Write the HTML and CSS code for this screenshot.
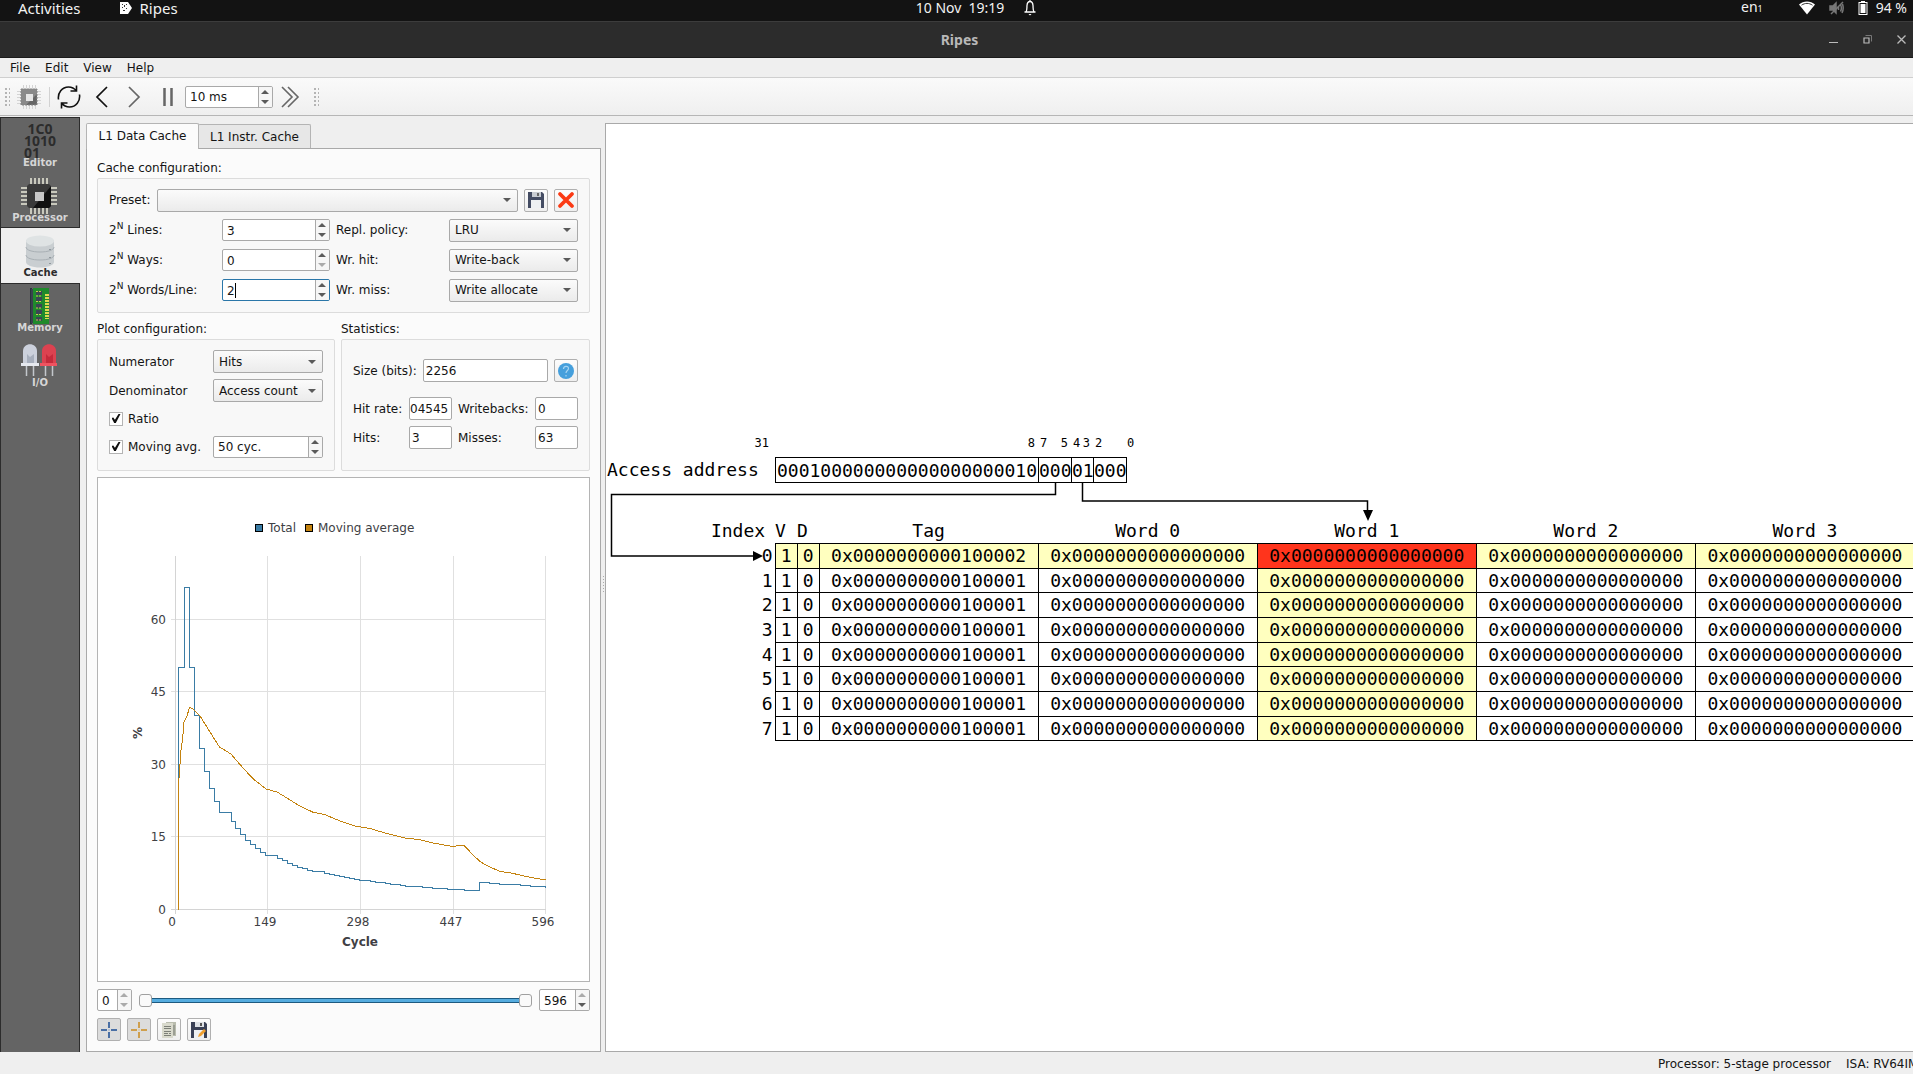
FILE: index.html
```html
<!DOCTYPE html>
<html lang="en">
<head>
<meta charset="utf-8">
<title>Ripes</title>
<link rel="stylesheet" href="styles.css">
</head>
<body>
<div class="app">
  <header class="topbar">
    <div class="topbar-left">
      <button class="plain">Activities</button>
      <button class="plain app-menu">
        <svg width="14" height="14" viewBox="0 0 14 14" aria-hidden="true"><path d="M1 1h8l4 6-4 6H1z" fill="#fff"/><path d="M3 3h1v1H3zM5 4h1v2H5zM3 6h1v1H3zM7 3h1v1H7zM7 7h1v1H7zM4 9h2v1H4z" fill="#333"/></svg>
        <span>Ripes</span>
      </button>
    </div>
    <div class="clock">
      <span>10 Nov&ensp;19:19</span>
      <svg width="14" height="16" viewBox="0 0 14 16" fill="none" stroke="#fff" stroke-width="1.300" aria-hidden="true"><path d="M1.500 12h11M3 12c1.200-2 .8-4 1-6.500C4.200 3 5.300 1.500 7 1.500S9.800 3 10 5.500c.2 2.500-.2 4.500 1 6.500M7 0v2"/><path d="M5.500 14h3L7 15.500z" fill="#fff" stroke="none"/></svg>
    </div>
    <div class="tray">
      <span class="lang">en<small>1</small></span>
      <svg width="16" height="14" viewBox="0 0 16 14" aria-hidden="true"><path d="M0 3.500C4.500-.5 11.500-.5 16 3.500L8 13.500z" fill="#fff"/><path d="M2.500 4.200c3.500-2.400 7.500-2.400 11 0" fill="none" stroke="#333" stroke-width="1"/></svg>
      <svg width="15" height="14" viewBox="0 0 15 14" fill="none" stroke="#777" stroke-width="1.500" aria-hidden="true"><path d="M1 5h3l3-3v10L4 9H1z" fill="#777"/><path d="M14 1 2 13M9.500 5v4M11.500 3.500c1 2 1 5 0 7M13.500 3c1 3 1 6-.5 9"/></svg>
      <svg width="10" height="14" viewBox="0 0 10 14" aria-hidden="true"><path d="M3 0h4v1h2.500v13H.5V1H3z" fill="#fff"/><path d="M1.500 2h7v11h-7z" fill="#131313"/><path d="M2.500 3h5v9h-5z" fill="#fff"/></svg>
      <span class="percent">94 %</span>
    </div>
  </header>

  <div class="titlebar">
    <h1>Ripes</h1>
    <div class="window-buttons">
      <button class="plain" aria-label="Minimize"><svg width="9" height="9" viewBox="0 0 9 9"><path d="M0 7.500h9" stroke="#bbb"/></svg></button>
      <button class="plain" aria-label="Restore"><svg width="9" height="9" viewBox="0 0 9 9" fill="none"><path d="M2.500.5h6v6" stroke="#777"/><path d="M1 3h5v5H1z" stroke="#bbb" stroke-width="1.200"/></svg></button>
      <button class="plain" aria-label="Close"><svg width="9" height="9" viewBox="0 0 9 9"><path d="m.5.5 8 8m0-8-8 8" stroke="#bbb" stroke-width="1.300"/></svg></button>
    </div>
  </div>

  <nav class="menubar">
    <button class="plain">File</button>
    <button class="plain">Edit</button>
    <button class="plain">View</button>
    <button class="plain">Help</button>
  </nav>

  <div class="toolbar">
    <span class="grip"></span>
    <button class="plain tool chip" aria-label="Select processor">
      <svg width="24" height="24" viewBox="0 0 24 24"><path d="M6.500 0v24M9.500 0v24M12.500 0v24M15.500 0v24M18.500 0v24M0 6.500h24M0 9.500h24M0 12.500h24M0 15.500h24M0 18.500h24" stroke="#d4d4d4"/><path d="M4 4h16v16H4z" fill="#8a8a8a"/><path d="M20 9v11H9z" fill="#666"/><path d="M4 4h16v16H4z" fill="none" stroke="#858585" stroke-dasharray="2 1"/><path d="M9 9h7v7H9z" fill="#e6e6e6"/></svg>
    </button>
    <span class="rule"></span>
    <button class="plain tool reset" aria-label="Reset">
      <svg width="24" height="24" viewBox="0 0 24 24" fill="none" stroke="#111" stroke-width="1.600"><path d="M1.500 14.500C.5 8 5 2 11.500 2c3.500 0 6 1.500 8 4M22.500 9.500C23.500 16 19 22 12.500 22c-3.500 0-6-1.500-8-4M19.500 .5V6h-6M4.500 23.500V18h6"/></svg>
    </button>
    <button class="plain tool back" aria-label="Step back">
      <svg width="14" height="22" viewBox="0 0 14 22"><path d="M12 1 2 11l10 10" fill="none" stroke="#111" stroke-width="1.700"/></svg>
    </button>
    <button class="plain tool step" aria-label="Step">
      <svg width="14" height="22" viewBox="0 0 14 22"><path d="m2 1 10 10L2 21" fill="none" stroke="#666" stroke-width="1.700"/></svg>
    </button>
    <button class="plain tool pause" aria-label="Pause">
      <svg width="10" height="18" viewBox="0 0 10 18"><path d="M1.500 0v18M8.500 0v18" stroke="#666" stroke-width="2.500"/></svg>
    </button>
    <span class="spin interval"><input type="text" value="10 ms" aria-label="Step interval"><button class="up" aria-label="Increase interval"></button><button class="down" aria-label="Decrease interval"></button></span>
    <button class="plain tool run" aria-label="Run">
      <svg width="19" height="22" viewBox="0 0 19 22"><path d="m1 1 10 10L1 21M7 1l10 10L7 21" fill="none" stroke="#666" stroke-width="1.600"/></svg>
    </button>
    <span class="grip"></span>
  </div>

  <div class="workspace">
    <nav class="sidebar">
      <button class="plain page">
        <span class="binary" aria-hidden="true"><span>&nbsp;1C0</span><span>1010</span><span>01</span></span>
        <span class="page-name">Editor</span>
      </button>
      <button class="plain page">
        <svg width="36" height="36" viewBox="0 0 36 36"><path d="M10 0v36M14 0v36M18 0v36M22 0v36M26 0v36M0 10h36M0 14h36M0 18h36M0 22h36M0 26h36" stroke="#c9c9bd" stroke-width="2"/><path d="M6 8l2-2h20l2 2v20l-2 2H8l-2-2z" fill="#3a3a3a"/><path d="M30 8v20l-2 2H12z" fill="#111"/><path d="M14 14h9v9h-9z" fill="#c8c8c8"/></svg>
        <span class="page-name">Processor</span>
      </button>
      <button class="plain page current">
        <svg width="30" height="36" viewBox="0 0 30 36"><path d="M1 7v22c0 3 6 5.500 14 5.500S29 32 29 29V7z" fill="#c9ced1"/><path d="M1 14c0 3 6 5 14 5s14-2 14-5M1 22c0 3 6 5 14 5s14-2 14-5" fill="none" stroke="#a9b0b5"/><ellipse cx="15" cy="8" rx="14" ry="5.500" fill="#dfe3e4"/><path d="M24 16h2v1h-2zM24 24h2v1h-2zM24 30h2v1h-2z" fill="#8f979c"/></svg>
        <span class="page-name">Cache</span>
      </button>
      <button class="plain page">
        <svg width="36" height="36" viewBox="0 0 36 36"><path d="M9 0h2v36H9z" fill="#2a323c"/><path d="M10 1h4v34h-4z" fill="#39424e"/><path d="M12 0h16v36H12z" fill="#1f8a2c"/><path d="M15 3h6v4h-6zM15 9h6v4h-6zM15 16h6v4h-6zM15 22h6v4h-6zM15 29h6v4h-6z" fill="#3b4654"/><path d="M15 3.500h6M15 8h6M15 13.500h6M15 20h6M15 26.500h6M15 32h6" stroke="#c8c850" stroke-dasharray="2 1"/><path d="M26 6v25" stroke="#e0d850" stroke-width="4" stroke-dasharray="2 1"/></svg>
        <span class="page-name">Memory</span>
      </button>
      <button class="plain page">
        <svg width="36" height="36" viewBox="0 0 36 36"><path d="M5.500 22v11M12.500 22v11M24.500 22v11M31.500 22v11" stroke="#c3c7cc" stroke-width="1.500"/><path d="M2 21V8c0-9 14-9 14 0v13z" fill="#ccd1dc"/><path d="M21 21V8c0-9 14-9 14 0v13z" fill="#dc4250"/><path d="M6 20v-9l3 3 4-3v9z" fill="#a7afbd"/><path d="M25 20v-9l3 3 4-3v9z" fill="#c52a3b"/><path d="M0 20h18v3H0z" fill="#e6e9ef"/><path d="M19 20h17v3H19z" fill="#ef5360"/></svg>
        <span class="page-name">I/O</span>
      </button>
    </nav>

    <section class="cache-panel">
      <div class="tabs" role="tablist">
        <button class="tab selected" role="tab" aria-selected="true">L1 Data Cache</button>
        <button class="tab" role="tab" aria-selected="false">L1 Instr. Cache</button>
      </div>
      <div class="pane">
        <h2>Cache configuration:</h2>
        <div class="box cache-config">
          <div class="preset">
            <label for="preset">Preset:</label>
            <span class="combo"><select id="preset"><option></option></select></span>
            <button class="icon-button" aria-label="Save preset"><svg width="16" height="16" viewBox="0 0 16 16"><path d="M0 0h14l2 2v14H0z" fill="#444c63"/><path d="M4 0h9v5H4z" fill="#c9cdd3"/><path d="M9 1h2v3H9z" fill="#666"/><path d="M3 8h10v8H3z" fill="#eef0f2"/></svg></button>
            <button class="icon-button" aria-label="Delete preset"><svg width="18" height="18" viewBox="0 0 18 18"><path d="m3 3 12 12m0-12L3 15" stroke="#fb3a14" stroke-width="3.800" stroke-linecap="round"/></svg></button>
          </div>
          <label for="lines">2<sup>N</sup> Lines:</label>
          <span class="spin"><input id="lines" type="text" value="3"><button class="up" aria-label="More lines"></button><button class="down" aria-label="Fewer lines"></button></span>
          <label for="repl">Repl. policy:</label>
          <span class="combo"><select id="repl"><option>LRU</option></select></span>
          <label for="ways">2<sup>N</sup> Ways:</label>
          <span class="spin"><input id="ways" type="text" value="0"><button class="up" aria-label="More ways"></button><button class="down" disabled aria-label="Fewer ways"></button></span>
          <label for="hit">Wr. hit:</label>
          <span class="combo"><select id="hit"><option>Write-back</option></select></span>
          <label for="words">2<sup>N</sup> Words/Line:</label>
          <span class="spin focused"><input id="words" type="text" value="2"><i class="caret"></i><button class="up" aria-label="More words"></button><button class="down" aria-label="Fewer words"></button></span>
          <label for="miss">Wr. miss:</label>
          <span class="combo"><select id="miss"><option>Write allocate</option></select></span>
        </div>

        <div class="pair">
          <div class="plot-group">
            <h2>Plot configuration:</h2>
            <div class="box plot-config">
              <label for="num">Numerator</label>
              <span class="combo"><select id="num"><option>Hits</option></select></span>
              <label for="den">Denominator</label>
              <span class="combo"><select id="den"><option>Access count</option></select></span>
              <label class="check wide"><input type="checkbox" checked>Ratio</label>
              <label class="check"><input type="checkbox" checked>Moving avg.</label>
              <span class="spin"><input type="text" value="50 cyc." aria-label="Moving average cycles"><button class="up" aria-label="More cycles"></button><button class="down" aria-label="Fewer cycles"></button></span>
            </div>
          </div>
          <div class="stats-group">
            <h2>Statistics:</h2>
            <div class="box stats">
              <div class="size-row">
                <label for="size">Size (bits):</label>
                <input class="line" id="size" type="text" value="2256" readonly>
                <button class="icon-button" aria-label="Size breakdown"><svg width="16" height="16" viewBox="0 0 16 16"><circle cx="8" cy="8" r="8" fill="#459fdc"/><path d="M5.500 6c0-3.500 5-3.500 5-.5C10.500 7.500 8 7.500 8 10M8 12v1.500" fill="none" stroke="#a5d4f2" stroke-width="1.200"/></svg></button>
              </div>
              <div class="stat-grid">
                <label for="rate">Hit rate:</label><input class="line scrolled" id="rate" type="text" value="04545" readonly>
                <label for="wb">Writebacks:</label><input class="line" id="wb" type="text" value="0" readonly>
                <label for="hits">Hits:</label><input class="line" id="hits" type="text" value="3" readonly>
                <label for="misses">Misses:</label><input class="line" id="misses" type="text" value="63" readonly>
              </div>
            </div>
          </div>
        </div>

        <div class="chart">
          <svg viewBox="0 0 491 503" preserveAspectRatio="xMidYMid meet" role="img" aria-label="Hit rate over cycles">
            <g transform="translate(-98 -478)">
              <g shape-rendering="crispEdges">
                <path class="grid-line" d="M267.500 556v358M360.500 556v358M453.500 556v358M545.500 556v358M171 619.500h375M171 691.500h375M171 764.500h375M171 836.500h375"/>
                <path class="axis-line" d="M175.500 556v358M171 909.500h375"/>
                <path class="swatch total" d="M255.500 524.500h7v7h-7z"/>
                <path class="swatch moving" d="M305.500 524.500h7v7h-7z"/>
                <path class="series total-line" d="M178.500 909.500V667.500H184.500V640.500V587.500H189.500V667.500H194.500V715.500H199.500V748.500H204.500V771.500H209.500V788.500H214.500V801.500H219.500V812.500H231.500V821.500H235.500V828.500H240.500V834.500H245.500V840.500H250.500V844.500H255.500V848.500H260.500V852.500H265.500V855.500H277.500V858.500H282.500V860.500H287.500V863.500H292.500V865.500H297.500V867.500H302.500V868.500H307.500V870.500H312.500V871.500H324.500V873.500H329.500V874.500H334.500V875.500H339.500V876.500H344.500V877.500H349.500V878.500H354.500V879.500H359.500V880.500H370.500V881.500H375.500V882.500H385.500V883.500H390.500V884.500H400.500V885.500H405.500V886.500H422.500V887.500H432.500V888.500H447.500V889.500H464.500V890.500H479.500V882.500H489.500V883.500H499.500V884.500H520.500V885.500H530.500V886.500H545.500V887.500"/>
                <path class="series moving-line" d="M178.500 909.500V785L181 750L182.500 740L184 722L187 716L189.500 707.500L193 708.700L200 716L215 740L219.500 747L231 754L243 768L253 778.700L266 789L277 792L287 798L298 805L312.500 812L324.500 814.500L340 821L355 826L370 828.500L385 833L405 838L420 839.700L433 843L453 846.500L460 845.500H464L468 849.500L473 855L479.500 861L485 864.700L500 871.500L510 872.700L527 876.700L540 879L546 879.700"/>
              </g>
              <g class="labels">
                <text x="268" y="532">Total</text>
                <text x="318" y="532">Moving average</text>
                <g text-anchor="end">
                  <text x="166" y="624">60</text>
                  <text x="166" y="696">45</text>
                  <text x="166" y="769">30</text>
                  <text x="166" y="841">15</text>
                  <text x="166" y="914">0</text>
                </g>
                <g text-anchor="middle">
                  <text x="172" y="926">0</text>
                  <text x="265" y="926">149</text>
                  <text x="358" y="926">298</text>
                  <text x="451" y="926">447</text>
                  <text x="543" y="926">596</text>
                  <text class="axis-title" x="360" y="946">Cycle</text>
                  <text class="axis-title" transform="translate(142 733) rotate(-90)">%</text>
                </g>
              </g>
            </g>
          </svg>
        </div>

        <div class="range-row">
          <span class="spin from"><input type="text" value="0" aria-label="Range start"><button class="up" disabled aria-label="Increase start"></button><button class="down" disabled aria-label="Decrease start"></button></span>
          <div class="dual-range">
            <input type="range" min="0" max="596" value="0" aria-label="First cycle">
            <input type="range" min="0" max="596" value="596" aria-label="Last cycle">
          </div>
          <span class="spin to"><input type="text" value="596" aria-label="Range end"><button class="up" disabled aria-label="Increase end"></button><button class="down" aria-label="Decrease end"></button></span>
        </div>

        <div class="plot-buttons">
          <button class="icon-button pressed" aria-label="Total crosshair"><svg width="16" height="16" viewBox="0 0 16 16"><path d="M8 0v6M8 10v6M0 8h6M10 8h6" stroke="#4a6fa5" stroke-width="2"/><path d="M7 7h2v2H7z" fill="#b9c4d4"/></svg></button>
          <button class="icon-button pressed" aria-label="Moving average crosshair"><svg width="16" height="16" viewBox="0 0 16 16"><path d="M8 0v6M8 10v6M0 8h6M10 8h6" stroke="#cf9f4d" stroke-width="2"/><path d="M7 7h2v2H7z" fill="#dccfb4"/></svg></button>
          <button class="icon-button" aria-label="Copy data"><svg width="16" height="16" viewBox="0 0 16 16"><path d="M5 0h10v14H5z" fill="#b9bcae"/><path d="M1 1h11v15H1z" fill="#d9dacd"/><path d="M3 4.500h7M3 6.500h7M3 9.500h7M3 11.500h4M8 11.500h2M3 13.500h7M13 3v10" stroke="#7d8078"/></svg></button>
          <button class="icon-button" aria-label="Save plot"><svg width="16" height="16" viewBox="0 0 16 16"><path d="M0 0h14l2 2v14H0z" fill="#3a4156"/><path d="M4 0h9v5H4z" fill="#dfe2e6"/><path d="M9 1h2v3H9z" fill="#555"/><path d="M3 8h10v8H3z" fill="#eef0f2"/><path d="m7 15 1-3 5-5 2 2-5 5z" fill="#f0a030"/></svg></button>
        </div>
      </div>
    </section>

    <div class="splitter"><span></span></div>

    <main class="view">
      <div class="scene">
        <div class="bit-row">
          <span class="bit-top">31</span>
          <span class="bits tag-bits end"><b>8</b></span>
          <span class="bits index-bits"><b>7</b><b>5</b></span>
          <span class="bits word-bits"><b>4</b><b>3</b></span>
          <span class="bits byte-bits"><b>2</b></span>
          <b>0</b>
        </div>
        <div class="address-row">
          <span class="address-label">Access address</span>
          <span class="address">
            <span class="tag-bits">000100000000000000000010</span>
            <span class="index-bits">000</span>
            <span class="word-bits">01</span>
            <span class="byte-bits">000</span>
          </span>
        </div>
        <table>
          <colgroup><col class="c-index"><col class="c-bit"><col class="c-bit"><col class="c-word"><col class="c-word"><col class="c-word"><col class="c-word"><col class="c-word"></colgroup>
          <thead><tr><th class="index-head">Index</th><th class="bit-head">V</th><th class="bit-head">D</th><th>Tag</th><th>Word 0</th><th>Word 1</th><th>Word 2</th><th>Word 3</th></tr></thead>
          <tbody>
            <tr class="hit"><th>0</th><td>1</td><td>0</td><td>0x0000000000100002</td><td>0x0000000000000000</td><td>0x0000000000000000</td><td>0x0000000000000000</td><td>0x0000000000000000</td></tr>
            <tr><th>1</th><td>1</td><td>0</td><td>0x0000000000100001</td><td>0x0000000000000000</td><td>0x0000000000000000</td><td>0x0000000000000000</td><td>0x0000000000000000</td></tr>
            <tr><th>2</th><td>1</td><td>0</td><td>0x0000000000100001</td><td>0x0000000000000000</td><td>0x0000000000000000</td><td>0x0000000000000000</td><td>0x0000000000000000</td></tr>
            <tr><th>3</th><td>1</td><td>0</td><td>0x0000000000100001</td><td>0x0000000000000000</td><td>0x0000000000000000</td><td>0x0000000000000000</td><td>0x0000000000000000</td></tr>
            <tr><th>4</th><td>1</td><td>0</td><td>0x0000000000100001</td><td>0x0000000000000000</td><td>0x0000000000000000</td><td>0x0000000000000000</td><td>0x0000000000000000</td></tr>
            <tr><th>5</th><td>1</td><td>0</td><td>0x0000000000100001</td><td>0x0000000000000000</td><td>0x0000000000000000</td><td>0x0000000000000000</td><td>0x0000000000000000</td></tr>
            <tr><th>6</th><td>1</td><td>0</td><td>0x0000000000100001</td><td>0x0000000000000000</td><td>0x0000000000000000</td><td>0x0000000000000000</td><td>0x0000000000000000</td></tr>
            <tr><th>7</th><td>1</td><td>0</td><td>0x0000000000100001</td><td>0x0000000000000000</td><td>0x0000000000000000</td><td>0x0000000000000000</td><td>0x0000000000000000</td></tr>
          </tbody>
        </table>
        <svg class="wires" width="800" height="308" viewBox="0 0 800 308" aria-hidden="true">
          <path d="M449.500 49v11.500H5.500v61.500H150M476.500 49v18h285v12" fill="none" stroke="#000" stroke-width="1.500"/>
          <path d="M147 117v10l10-5zM757 76h10l-5 11z"/>
        </svg>
      </div>
    </main>
  </div>

  <footer class="statusbar">
    <span>Processor: 5-stage processor</span>
    <span class="isa">ISA: RV64IM</span>
  </footer>
</div>
</body>
</html>
```
FILE: styles.css
```css
* { box-sizing: border-box; }

body {
  margin: 0;
  font: 12px/20px "DejaVu Sans", sans-serif;
  color: #141414;
  background: #efefef;
  overflow: hidden;
}

button, input, select { font: inherit; color: inherit; margin: 0; }
svg { display: block; }
h1, h2 { margin: 0; font-size: inherit; font-weight: normal; }

.plain { border: 0; padding: 0; background: none; }

.app { display: flex; flex-direction: column; height: 100vh; }

/* desktop bar */
.topbar {
  display: grid;
  grid-template-columns: 1fr auto 1fr;
  height: 21px;
  padding: 0 6px 0 18px;
  background: #131313;
  color: #f2f2f2;
  font: 14px/16px "Noto Sans", sans-serif;
  align-items: start;
}
.topbar-left, .clock, .tray, .app-menu { display: flex; align-items: center; height: 16px; }
.topbar-left { gap: 38px; font-size: 15px; }
.app-menu { gap: 7px; }
.clock { gap: 19px; padding-left: 28px; }
.tray { justify-content: flex-end; }
.tray small { font-size: 9px; }
.lang { margin-right: 36px; }
.tray svg { margin-right: 14px; }
.tray svg:last-of-type { margin-right: 8px; }

.titlebar {
  display: grid;
  grid-template-columns: 1fr auto 1fr;
  align-items: center;
  height: 37px;
  padding: 0 7px 0 13px;
  background: #2c2c2c;
  border-top: 1px solid #3c3c3c;
  border-bottom: 1px solid #1b1b1b;
  color: #b8b8b8;
}
.titlebar h1 { grid-column: 2; font: bold 14px/20px "Noto Sans", sans-serif; }
.window-buttons { display: flex; justify-content: flex-end; gap: 25px; }

.menubar {
  display: flex;
  gap: 15px;
  height: 20px;
  padding-left: 10px;
  border-bottom: 1px solid #cfcfcf;
}

.toolbar {
  display: flex;
  align-items: center;
  height: 38px;
  padding-left: 5px;
  background: linear-gradient(#fafafa, #efefef);
  border-bottom: 1px solid #b6b6b6;
}
.grip {
  width: 5px;
  height: 18px;
  background: radial-gradient(circle at 1px 1px, #b4b4b4 1px, transparent 1px) 0 0 / 4px 4px;
}
.rule { width: 1px; height: 20px; background: #d2d2d2; }
.chip { margin: 0 8px 0 7px; }
.reset { margin: 0 14px 0 7px; }
.back { margin-right: 18px; }
.step { margin-right: 22px; }
.interval { width: 88px; margin: 0 8px 0 12px; }
.run { margin-right: 14px; }

/* workspace */
.workspace { display: flex; flex: 1; min-height: 0; }

.sidebar {
  width: 80px;
  margin-top: 1px;
  background: #646464;
  border: 1px solid #2c2c2c;
  border-width: 1px 1px 0;
}
.page {
  display: flex;
  flex-direction: column;
  align-items: center;
  width: 78px;
  height: 55px;
  padding-top: 5px;
  color: #d6d6d6;
  font-weight: bold;
}
.page svg { height: 36px; flex: none; margin-right: 2px; }
.page-name { font-size: 10px; line-height: 10px; margin-top: -1px; }
.page.current {
  width: 79px;
  background: #efefef;
  color: #2c2c2c;
  box-shadow: 0 -1px #2c2c2c, 0 1px #2c2c2c;
}
.binary {
  display: grid;
  height: 36px;
  font: bold 14px/12px "Noto Sans", sans-serif;
  color: #2c2c2c;
  text-align: left;
}

.cache-panel {
  display: flex;
  flex-direction: column;
  width: 515px;
  margin: 7px 0 0 6px;
}
.tabs { display: flex; align-items: flex-end; height: 25px; }
.tab {
  height: 24px;
  width: 113px;
  margin-left: -1px;
  padding: 1px 0 0;
  border: 1px solid #b4b4b4;
  border-bottom: 0;
  border-radius: 2px 2px 0 0;
  background: #e7e7e7;
}
.tab.selected {
  height: 26px;
  width: 113px;
  margin: 0 0 -1px;
  padding: 0 0 1px;
  background: #fbfbfb;
  position: relative;
}
.pane {
  display: flex;
  flex-direction: column;
  flex: 1;
  min-height: 0;
  padding: 9px 10px 10px;
  background: #fbfbfb;
  border: 1px solid #a9a9a9;
}
.box {
  padding: 10px 11px;
  background: #f8f8f8;
  border: 1px solid #dcdcdc;
  border-radius: 2px;
}

.cache-config {
  display: grid;
  grid-template-columns: 107px 108px 107px 1fr;
  grid-auto-rows: 24px;
  gap: 6px;
  align-items: center;
  padding: 9px 11px 10px;
}
.preset { grid-column: 1 / -1; display: flex; align-items: center; gap: 6px; }
.preset label { width: 42px; }
.preset .combo { flex: 1; }
sup { font-size: 9px; line-height: 0; vertical-align: 5px; }

.pair { display: flex; gap: 6px; margin: 6px 0; }
.plot-group { width: 238px; }
.stats-group { flex: 1; }
.plot-config {
  display: grid;
  grid-template: 23px 23px 21px 23px / 98px 1fr;
  gap: 6px;
  align-items: center;
  align-content: start;
  height: 132px;
}
.stats { height: 132px; padding-top: 19px; }
.size-row { display: flex; gap: 6px; align-items: center; margin-bottom: 15px; }
.size-row .line { flex: 1; }
.stat-grid {
  display: grid;
  grid-template-columns: 50px 1fr 71px 1fr;
  gap: 6px;
  align-items: center;
}
label { white-space: nowrap; }

/* controls */
.combo { display: grid; align-items: center; height: 23px; }
.combo select {
  grid-area: 1 / 1;
  appearance: none;
  width: 100%;
  height: 23px;
  padding: 0 0 0 5px;
  border: 1px solid #a9a9a9;
  border-radius: 2px;
  background: linear-gradient(#fbfbfb, #ebebeb);
}
.combo::after {
  content: "";
  grid-area: 1 / 1;
  justify-self: end;
  margin-right: 7px;
  border: 4px solid transparent;
  border-top-color: #5a5a5a;
  border-bottom: 0;
  pointer-events: none;
}

.spin {
  display: grid;
  grid-template: 1fr 1fr / 1fr 14px;
  height: 22px;
  border: 1px solid #a9a9a9;
  border-radius: 2px;
  background: #fff;
  overflow: hidden;
}
.spin input {
  grid-area: 1 / 1 / 3 / 2;
  min-width: 0;
  width: 100%;
  padding: 1px 0 0 4px;
  border: 0;
  background: none;
  outline: 0;
}
.spin button {
  display: grid;
  place-content: center;
  grid-column: 2;
  min-height: 0;
  padding: 0 1px 0 0;
  border: 0;
  border-left: 1px solid #a9a9a9;
  background: #f6f6f6;
}
.spin .up { grid-row: 1; }
.spin .down { grid-row: 2; }
.spin button::before { content: ""; border: 4px solid transparent; }
.spin .up::before { border-bottom-color: #5a5a5a; border-top: 0; }
.spin .down::before { border-top-color: #5a5a5a; border-bottom: 0; }
.spin .up:disabled::before { border-bottom-color: #aaa; }
.spin .down:disabled::before { border-top-color: #aaa; }
.spin.focused { border-color: #2a76a8; }
.caret { grid-area: 1 / 1 / 3 / 2; align-self: center; width: 1px; height: 15px; margin-left: 12px; background: #000; }

.line {
  width: 100%;
  min-width: 0;
  height: 23px;
  padding: 0 2px;
  border: 1px solid #a9a9a9;
  border-radius: 2px;
  background: #fff;
}
.line.scrolled { padding: 0; }

.icon-button {
  display: grid;
  place-items: center;
  flex: none;
  width: 24px;
  height: 23px;
  padding: 0;
  border: 1px solid #b0b0b0;
  border-radius: 2px;
  background: linear-gradient(#fcfcfc, #efefef);
}
.icon-button.pressed { background: #dcdcdc; }

.check { display: flex; align-items: center; gap: 5px; }
.check.wide { grid-column: 1 / -1; }
.check input {
  display: grid;
  place-items: center;
  appearance: none;
  width: 14px;
  height: 14px;
  border: 1px solid #b4b4b4;
  background: #fff;
}
.check input:checked::before {
  content: "";
  width: 9px;
  height: 9px;
  background: #111;
  clip-path: polygon(0 45%, 20% 38%, 38% 65%, 78% 0, 100% 0, 48% 100%, 30% 100%);
}

/* plot */
.chart { flex: 1; min-height: 0; background: #fff; border: 1px solid #b4b4b4; }
.chart svg { width: 100%; height: 100%; }
.grid-line, .axis-line, .series { fill: none; stroke-width: 1; }
.grid-line { stroke: #e0e0e0; }
.axis-line { stroke: #d4d4d4; }
.swatch { stroke: #000; }
.swatch.total { fill: #3a7ca5; }
.swatch.moving { fill: #c4830f; }
.total-line { stroke: #3a7ca5; }
.moving-line { stroke: #c4830f; }
.labels { font-size: 12px; fill: #404044; }
.axis-title { font-weight: bold; }

.range-row { display: flex; align-items: center; gap: 7px; margin: 7px 0; }
.from { width: 35px; }
.to { width: 51px; }
.dual-range {
  display: grid;
  flex: 1;
  align-items: center;
  background: linear-gradient(#1d5a80 0 1px, #55acdf 1px 4px, #1d5a80 4px) 6px 50% / calc(100% - 12px) 5px no-repeat;
}
.dual-range input {
  grid-area: 1 / 1;
  appearance: none;
  width: 100%;
  height: 14px;
  background: none;
  pointer-events: none;
}
.dual-range input::-webkit-slider-thumb {
  appearance: none;
  width: 13px;
  height: 13px;
  border: 1px solid #a0a0a0;
  border-radius: 3px;
  background: #fafafa;
  pointer-events: auto;
}
.plot-buttons { display: flex; gap: 6px; }

.splitter { display: flex; align-items: center; justify-content: center; width: 4px; }
.splitter span { width: 1px; height: 17px; background: repeating-linear-gradient(#aaa 0 1px, transparent 1px 3px); }

/* cache drawing */
.view {
  display: flex;
  align-items: center;
  flex: 1;
  min-width: 0;
  margin-top: 7px;
  border: 1px solid #a9a9a9;
  border-right: 0;
  background: #fff;
  overflow: hidden;
}
.scene {
  position: relative;
  flex: none;
  font: 18px/24px "DejaVu Sans Mono", monospace;
  color: #000;
}
.bit-row { display: flex; height: 19px; font-size: 12px; line-height: 19px; }
.bit-row b { font-weight: normal; }
.bit-top { width: 169px; padding-right: 6px; text-align: right; }
.bits { display: flex; justify-content: space-between; padding: 0 3px 0 2px; }
.bits.end { justify-content: flex-end; }
.tag-bits { width: 263px; }
.index-bits { width: 33px; }
.word-bits { width: 22px; }
.byte-bits { width: 34px; }
.address-row { display: flex; margin-top: 4px; line-height: 26px; }
.address-label { width: 169px; padding-left: 1px; }
.address { display: flex; height: 26px; border: 1px solid #000; border-width: 1px 0; line-height: 25px; }
.address span { text-align: center; border-left: 1px solid #000; }
.address span:last-child { border-right: 1px solid #000; }

table { table-layout: fixed; width: 1309px; margin-top: 36px; border-collapse: collapse; }
.c-index { width: 169px; }
.c-bit { width: 22px; }
.c-word { width: 219px; }
th, td { padding: 0; font-weight: normal; text-align: center; white-space: nowrap; }
thead th { height: 25px; }
tbody tr { height: 25px; }
tbody tr:nth-child(3n + 2) { height: 24px; }
tbody th, .index-head { text-align: right; }
tbody th { padding-right: 2px; }
.index-head { padding-right: 10px; }
.bit-head { text-align: left; }
td { border: 1px solid #000; line-height: 22px; }
tbody td:nth-child(6), .hit td { background: #ffffbf; }
.hit td:nth-child(6) { background: #ff341c; }
.wires { position: absolute; left: 0; top: 0; }

.statusbar {
  display: flex;
  justify-content: flex-end;
  gap: 15px;
  height: 22px;
  line-height: 24px;
  white-space: nowrap;
}
.isa { width: 67px; }
```
